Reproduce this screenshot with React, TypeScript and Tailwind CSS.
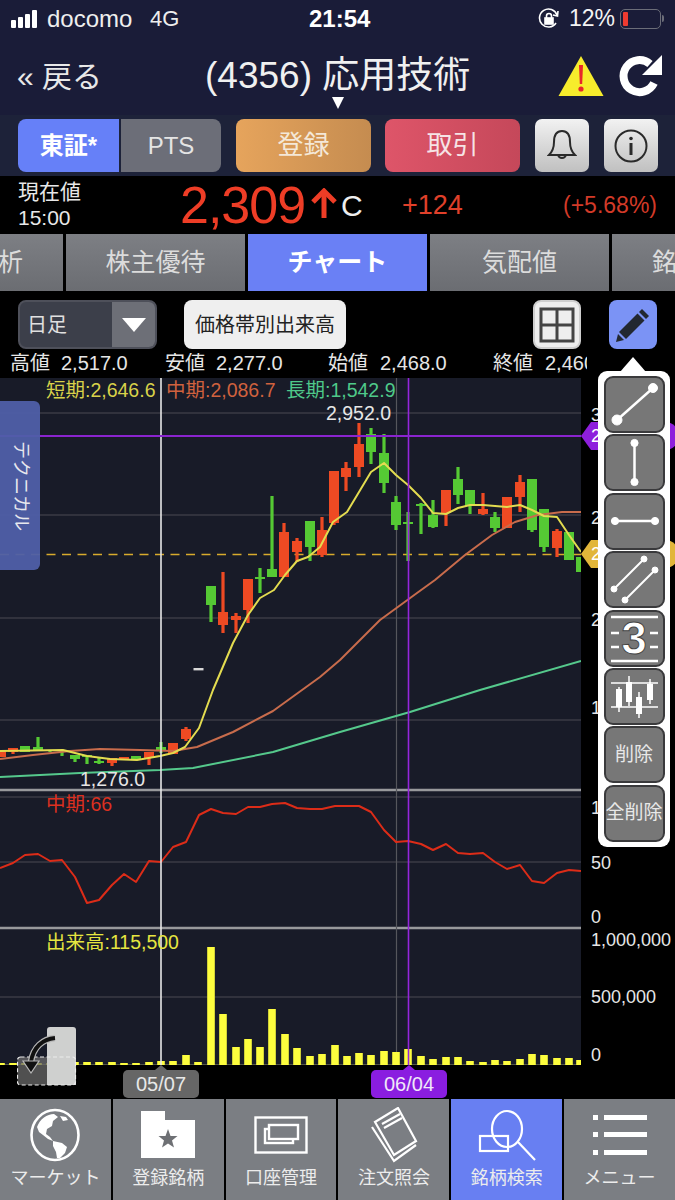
import React from 'react';

type Candle = [number, number, number, number, number, 'r' | 'g'];

// x, wick top, wick bottom, body top, body bottom, colour
const candles: Candle[] = [
    [1, 751, 757, 751, 757, 'r'], [13, 748, 754, 748, 752, 'r'], [25, 746, 752, 746, 752, 'g'], [38, 737, 750, 747, 750, 'g'],
    [50, 750, 752, 750, 751, 'g'], [62, 750, 756, 750, 751, 'g'], [75, 755, 762, 755, 759, 'g'], [87, 755, 764, 755, 757, 'g'],
    [99, 758, 764, 761, 763, 'g'], [112, 758, 766, 758, 763, 'r'], [124, 757, 760, 757, 760, 'r'], [136, 756, 760, 756, 760, 'g'],
    [149, 752, 765, 752, 758, 'r'], [161, 742, 753, 747, 751, 'g'], [173, 743, 754, 743, 754, 'r'], [186, 727, 741, 729, 739, 'r'],
    [211, 586, 622, 586, 605, 'g'], [223, 572, 633, 612, 625, 'r'], [236, 613, 633, 616, 620, 'r'], [248, 579, 623, 579, 610, 'r'],
    [260, 568, 593, 577, 579, 'g'], [272, 496, 577, 569, 577, 'g'], [284, 523, 577, 532, 577, 'r'], [297, 538, 562, 541, 552, 'r'],
    [310, 521, 561, 521, 547, 'g'], [322, 517, 557, 530, 555, 'r'], [334, 471, 525, 471, 523, 'r'], [346, 462, 491, 468, 477, 'r'],
    [359, 423, 477, 444, 467, 'r'], [371, 428, 464, 434, 452, 'g'], [384, 434, 493, 453, 483, 'g'], [396, 496, 530, 502, 525, 'g'],
    [408, 512, 561, 522, 524, 'g'], [421, 503, 534, 504, 506, 'g'], [433, 500, 528, 515, 527, 'g'], [446, 490, 526, 490, 513, 'r'],
    [458, 467, 504, 479, 495, 'g'], [470, 490, 514, 490, 506, 'g'], [483, 493, 515, 509, 514, 'r'], [495, 512, 532, 517, 528, 'g'],
    [507, 497, 528, 497, 528, 'r'], [520, 475, 512, 482, 497, 'r'], [532, 479, 532, 479, 530, 'g'], [544, 509, 552, 509, 547, 'g'],
    [557, 529, 557, 531, 548, 'r'], [569, 532, 560, 532, 560, 'g'], [581, 557, 572, 557, 572, 'g'],
];

const shortLine = '0,751 63,750 87,756 110,759 137,760 160,756 173,753 185,747 199,728 213,690 233,643 248,615 260,598 274,590 285,575 297,561 308,557 320,547 333,522 347,512 359,492 371,472 384,463 396,475 408,485 421,498 433,513 446,514 458,508 470,505 483,505 495,506 507,507 520,505 532,510 544,516 557,517 569,535 581,552';
const midLine = '0,759 33,755 70,751 100,749 140,750 173,751 197,747 233,732 273,711 320,677 340,660 380,620 417,593 435,580 465,555 492,535 515,522 538,515 562,512 581,512';
const longLine = '0,777 80,773 160,770 193,768 273,752 340,732 410,712 480,690 581,661';
const rsiLine = '0,868 13,863 25,855 38,854 50,861 62,860 75,877 87,903 99,900 112,885 124,874 136,882 149,861 161,862 173,847 186,842 199,815 211,809 223,813 236,814 248,807 260,807 272,804 285,803 297,808 310,809 322,809 335,806 359,806 371,812 384,830 396,842 408,841 421,844 433,850 446,844 458,853 470,854 483,853 495,862 507,869 520,865 532,881 544,883 557,873 569,870 581,871';

// x, top of bar
const volumes: [number, number][] = [
    [1, 1063], [13, 1063], [25, 1063], [38, 1063], [50, 1063], [62, 1062], [75, 1062], [87, 1062], [99, 1062], [112, 1062], [124, 1063], [136, 1063],
    [149, 1062], [161, 1061], [173, 1061], [186, 1055], [198, 1062], [211, 947], [223, 1014], [236, 1047], [248, 1039], [260, 1047], [272, 1009],
    [285, 1034], [297, 1048], [310, 1056], [322, 1054], [335, 1045], [347, 1056], [359, 1053], [371, 1055], [384, 1051], [396, 1052], [408, 1049],
    [421, 1056], [433, 1059], [446, 1057], [458, 1057], [470, 1061], [483, 1062], [495, 1060], [507, 1061], [520, 1059], [532, 1054], [544, 1055],
    [557, 1058], [569, 1058], [580, 1060],
];

const gridLines = [413, 515, 618, 720, 797, 862, 997];

const ChartSvg = () => (
    <svg viewBox="0 378 581 687" className="block h-[687px] w-[581px]">
        <rect x="0" y="378" width="581" height="687" fill="#181b28" />
        {gridLines.map((y) => (
            <line key={y} x1="0" x2="581" y1={y} y2={y} stroke="#4a4b52" strokeWidth="1.2" />
        ))}
        <line x1="0" x2="581" y1="790" y2="790" stroke="#98999c" strokeWidth="2.5" />
        <line x1="0" x2="581" y1="928" y2="928" stroke="#98999c" strokeWidth="2.5" />
        <line x1="396.5" x2="396.5" y1="378" y2="1065" stroke="#55565c" strokeWidth="1.2" />
        <line x1="0" x2="581" y1="554.5" y2="554.5" stroke="#d8ab2c" strokeWidth="1.6" strokeDasharray="9 6.5" />
        {candles.map(([x, wt, wb, bt, bb, c]) => (
            <g key={x} fill={c === 'r' ? '#ee4a23' : '#55c934'}>
                <rect x={x - 1.6} y={wt} width="3.2" height={wb - wt} />
                <rect x={x - 5} y={bt} width="10" height={bb - bt} />
            </g>
        ))}
        <rect x="193.5" y="668" width="10" height="2.4" fill="#d8d8d8" />
        <polyline points={longLine} fill="none" stroke="#55c98c" strokeWidth="2" strokeLinejoin="round" />
        <polyline points={midLine} fill="none" stroke="#c86c4c" strokeWidth="2" strokeLinejoin="round" />
        <polyline points={shortLine} fill="none" stroke="#e3dc50" strokeWidth="2" strokeLinejoin="round" />
        <polyline points={rsiLine} fill="none" stroke="#dc2c18" strokeWidth="2" strokeLinejoin="round" />
        <line x1="0" x2="581" y1="1064.5" y2="1064.5" stroke="#55564a" strokeWidth="1" />
        {volumes.map(([x, top]) => (
            <rect key={x} x={x - 3.8} y={top} width="7.6" height={1065 - top} fill="#fdfd3e" />
        ))}
        <line x1="161" x2="161" y1="378" y2="1065" stroke="#e8e8e8" strokeWidth="1.6" />
        <line x1="408.5" x2="408.5" y1="378" y2="1065" stroke="#9526dc" strokeWidth="1.6" />
        <line x1="0" x2="581" y1="436" y2="436" stroke="#8a24cf" strokeWidth="2" />
    </svg>
);

const ToolButton = ({ children }: { children: React.ReactNode }) => (
    <div className="flex h-[57px] w-[61px] items-center justify-center whitespace-nowrap rounded-[9px] border-2 border-[#3a3a3c] bg-[#777777] text-[19px] text-[#e8e8e8]">
        {children}
    </div>
);

const ToolPopup = () => (
    <div className="absolute left-[598px] top-[80px] z-20 flex w-[72px] flex-col items-center gap-[1.4px] rounded-[9px] bg-white py-[5px]">
        <div className="absolute -top-[14px] left-[22px] h-0 w-0 border-x-[13px] border-b-[15px] border-x-transparent border-b-white" />
        <ToolButton>
            <svg width="57" height="53" viewBox="0 0 57 53" fill="white" stroke="white">
                <circle cx="11" cy="42" r="5" />
                <circle cx="47" cy="10" r="4.5" />
                <line x1="11" y1="42" x2="47" y2="10" strokeWidth="2.5" />
            </svg>
        </ToolButton>
        <ToolButton>
            <svg width="57" height="53" viewBox="0 0 57 53" fill="white" stroke="white">
                <circle cx="28.5" cy="7" r="3.6" />
                <circle cx="28.5" cy="46" r="3.6" />
                <line x1="28.5" y1="7" x2="28.5" y2="46" strokeWidth="2.5" />
            </svg>
        </ToolButton>
        <ToolButton>
            <svg width="57" height="53" viewBox="0 0 57 53" fill="white" stroke="white">
                <circle cx="9" cy="26" r="3.6" />
                <circle cx="49" cy="26" r="3.6" />
                <line x1="9" y1="26" x2="49" y2="26" strokeWidth="2.5" />
            </svg>
        </ToolButton>
        <ToolButton>
            <svg width="57" height="53" viewBox="0 0 57 53" fill="white" stroke="white">
                <circle cx="8" cy="36" r="3" />
                <circle cx="38" cy="6" r="3" />
                <line x1="8" y1="36" x2="38" y2="6" strokeWidth="2" />
                <circle cx="19" cy="47" r="3" />
                <circle cx="49" cy="17" r="3" />
                <line x1="19" y1="47" x2="49" y2="17" strokeWidth="2" />
            </svg>
        </ToolButton>
        <ToolButton>
            <div className="relative flex h-full w-full items-center justify-center">
                <svg width="57" height="53" viewBox="0 0 57 53" stroke="white" strokeWidth="2.5" className="absolute left-0 top-0">
                    <line x1="5" y1="5" x2="52" y2="5" />
                    <line x1="5" y1="21" x2="52" y2="21" strokeDasharray="8 31 8" />
                    <line x1="5" y1="35" x2="52" y2="35" strokeDasharray="8 31 8" />
                    <line x1="5" y1="49" x2="52" y2="49" />
                </svg>
                <span className="relative text-[46px] font-bold leading-none text-white [-webkit-text-stroke:1px_#444]">3</span>
            </div>
        </ToolButton>
        <ToolButton>
            <svg width="57" height="53" viewBox="0 0 57 53" fill="white" stroke="white">
                <line x1="5" y1="13" x2="52" y2="13" strokeWidth="1.5" />
                <line x1="5" y1="37" x2="52" y2="37" strokeWidth="1.5" />
                <line x1="13" y1="17" x2="13" y2="42" strokeWidth="1.5" />
                <rect x="10" y="19" width="6" height="18" stroke="none" />
                <line x1="23" y1="6" x2="23" y2="36" strokeWidth="1.5" />
                <rect x="20" y="12" width="6" height="20" stroke="none" />
                <line x1="33" y1="22" x2="33" y2="48" strokeWidth="1.5" />
                <rect x="30" y="27" width="6" height="17" stroke="none" />
                <line x1="44" y1="9" x2="44" y2="34" strokeWidth="1.5" />
                <rect x="41" y="14" width="6" height="16" stroke="none" />
            </svg>
        </ToolButton>
        <ToolButton>削除</ToolButton>
        <ToolButton>全削除</ToolButton>
    </div>
);

const axisLabels: [string, number][] = [
    ['3', 403], ['2', 608], ['1', 696], ['1', 796], ['50', 851], ['0', 905], ['1,000,000', 928], ['500,000', 985], ['0', 1043], ['2', 506],
];

const AxisBadge = ({ top, bg, border }: { top: string; bg: string; border: string }) => (
    <div className={`absolute left-0 flex h-[28px] w-[98px] ${top}`}>
        <span className={`h-0 w-0 border-y-[14px] border-r-[10px] border-y-transparent ${border}`} />
        <span className={`flex flex-1 items-center rounded-r-[14px] text-white ${bg}`}>2</span>
    </div>
);

const RightAxis = () => (
    <div className="relative h-[687px] flex-1 overflow-hidden bg-black text-[18px] leading-[24px] text-[#e6e6e6]">
        {axisLabels.map(([label, y]) => (
            <span key={label + y} className="absolute left-[10px]" style={{ top: y - 378 }}>
                {label}
            </span>
        ))}
        <AxisBadge top="top-[44px]" bg="bg-[#8e1fdc]" border="border-r-[#8e1fdc]" />
        <AxisBadge top="top-[162px]" bg="bg-[#e2b63a]" border="border-r-[#e2b63a]" />
    </div>
);

const GlobeIcon = () => (
    <svg width="52" height="54" viewBox="0 0 52 54" fill="white">
        <ellipse cx="26" cy="27" rx="23.5" ry="25" fill="none" stroke="white" strokeWidth="2.6" />
        <path d="M8 19 C11 11 18 6 25 6 L29 9 L24 13 L23 18 L18 21 L17 26 L21 29 L24 33 L19 31 L14 27 L10 24 Z" />
        <path d="M24 33 L33 35 L38 39 L36 45 L31 50 L28 50 L27 44 L24 38 Z" />
        <path d="M31 8 L37 9 L39 12 L34 13 Z" />
    </svg>
);

const FolderIcon = () => (
    <svg width="54" height="47" viewBox="0 0 54 47">
        <path d="M0 0 H24 V9 H54 V47 H0 Z" fill="white" />
        <path d="M27 18 L29.5 25 L36.5 25 L31 29.5 L33 36.5 L27 32.5 L21 36.5 L23 29.5 L17.5 25 L24.5 25 Z" fill="#6e7074" />
    </svg>
);

const AccountIcon = () => (
    <svg width="54" height="38" viewBox="0 0 54 38" fill="none" stroke="white" strokeWidth="2.4">
        <rect x="1.5" y="1.5" width="51" height="35" />
        <rect x="11" y="13" width="28" height="14" />
        <rect x="15" y="9" width="29" height="14" fill="#7b7e83" />
    </svg>
);

const OrderIcon = () => (
    <svg width="48" height="56" viewBox="0 0 48 56" fill="none" stroke="white" strokeWidth="2.2">
        <path d="M2 20 L24 54 L46 38" />
        <path d="M5 15 L28 1 L46 34 L24 48 Z" fill="#7b7e83" />
        <line x1="12" y1="17" x2="30" y2="7" />
        <line x1="14" y1="21" x2="32" y2="11" />
    </svg>
);

const SearchIcon = () => (
    <svg width="58" height="54" viewBox="0 0 58 54" fill="none" stroke="white" strokeWidth="2.2">
        <rect x="2" y="28" width="28" height="15" />
        <ellipse cx="29" cy="21" rx="15" ry="18" />
        <line x1="40" y1="34" x2="57" y2="52" />
    </svg>
);

const MenuIcon = () => (
    <svg width="54" height="42" viewBox="0 0 54 42" fill="white">
        <rect x="0" y="1" width="5" height="5" />
        <rect x="11" y="1" width="43" height="5" />
        <rect x="0" y="18" width="5" height="5" />
        <rect x="11" y="18" width="43" height="5" />
        <rect x="0" y="36" width="5" height="5" />
        <rect x="11" y="36" width="43" height="5" />
    </svg>
);

const navItems = [
    { label: 'マーケット', icon: <GlobeIcon /> },
    { label: '登録銘柄', icon: <FolderIcon /> },
    { label: '口座管理', icon: <AccountIcon /> },
    { label: '注文照会', icon: <OrderIcon /> },
    { label: '銘柄検索', icon: <SearchIcon />, active: true },
    { label: 'メニュー', icon: <MenuIcon /> },
];

export default function App() {
    return (
        <div className="flex h-[1200px] w-[675px] flex-col overflow-hidden bg-black font-['Liberation_Sans','Noto_Sans_CJK_JP',sans-serif] text-white">
            {/* status bar + title */}
            <div className="flex h-[115px] flex-col bg-[#1a1c38]">
                <div className="flex h-[37px] items-center pl-[11px] pr-[8px] text-[24px]">
                    <div className="flex items-end gap-[2px]">
                        <span className="h-[8px] w-[5px] rounded-[1px] bg-white" />
                        <span className="h-[11px] w-[5px] rounded-[1px] bg-white" />
                        <span className="h-[14px] w-[5px] rounded-[1px] bg-white" />
                        <span className="h-[18px] w-[5px] rounded-[1px] bg-white" />
                    </div>
                    <span className="ml-[10px] w-[103px] text-[#eeeeee]">docomo</span>
                    <span className="w-[159px] text-[22px] text-[#eeeeee]">4G</span>
                    <span className="w-[229px] font-bold text-white">21:54</span>
                    <svg width="22" height="22" viewBox="0 0 22 22" fill="none" stroke="white" strokeWidth="1.6">
                        <path d="M18 15 A9 9 0 1 1 19 7" />
                        <path d="M20 3 L19.5 8 L15 7" />
                        <rect x="7" y="10" width="8" height="6" fill="white" />
                        <path d="M8.5 10 V8 A2.5 2.5 0 0 1 13.5 8 V10" />
                    </svg>
                    <span className="ml-[9px] text-[23px] text-[#f4f4f4]">12%</span>
                    <div className="ml-[5px] flex h-[20px] w-[41px] items-center rounded-[5px] border border-[#6b6d78] px-[2px]">
                        <span className="h-[14px] w-[5px] rounded-[1px] bg-[#ee3b30]" />
                    </div>
                    <span className="ml-px h-[7px] w-[2px] rounded-r bg-[#6b6d78]" />
                </div>
                <div className="relative flex flex-1 items-center pl-[17px] pr-[13px]">
                    <span className="w-[188px] text-[30px] text-[#e8e8e8]">« 戻る</span>
                    <span className="flex-1 whitespace-nowrap text-[37px] leading-[44px] text-[#f0f0f0]">(4356) 応用技術</span>
                    <svg width="46" height="42" viewBox="0 0 46 42" className="mr-[14px]">
                        <path d="M23 1 L45.5 41 H0.5 Z" fill="#f7ec2c" />
                        <path d="M21 10 H25 L24.2 29 H21.8 Z" fill="#e8262a" />
                        <circle cx="23" cy="34" r="2.6" fill="#e8262a" />
                    </svg>
                    <svg width="44" height="44" viewBox="0 0 44 44" fill="none">
                        <path d="M36 29 A16 16 0 1 1 32 10" stroke="white" strokeWidth="8" />
                        <path d="M44 1 V21 H24 Z" fill="white" />
                    </svg>
                    <span className="absolute bottom-[6px] left-[332px] h-0 w-0 border-x-[6px] border-t-[12px] border-x-transparent border-t-white" />
                </div>
            </div>

            {/* market / action buttons */}
            <div className="flex h-[61px] items-start bg-[#1d2239] pl-[18px] pt-[4px]">
                <div className="flex h-[53px] w-[203px] overflow-hidden rounded-[8px]">
                    <div className="flex w-[101px] items-center justify-center bg-[#6680f8] text-[24px] font-bold">東証*</div>
                    <div className="ml-[2px] flex flex-1 items-center justify-center bg-[#6c6e78] text-[24px] text-[#e4e4e4]">PTS</div>
                </div>
                <div className="ml-[15px] flex h-[53px] w-[135px] items-center justify-center rounded-[8px] bg-linear-to-r from-[#e6a45c] to-[#c58c50] text-[26px] text-[#f4e8d8]">登録</div>
                <div className="ml-[14px] flex h-[53px] w-[135px] items-center justify-center rounded-[8px] bg-linear-to-r from-[#de5569] to-[#c5485a] text-[26px] text-[#f6e4e6]">取引</div>
                <div className="ml-[15px] flex h-[53px] w-[54px] items-center justify-center rounded-[7px] bg-linear-to-b from-[#f2f2f2] to-[#c0c0c0]">
                    <svg width="30" height="34" viewBox="0 0 30 34" fill="none" stroke="#2a2a2a" strokeWidth="2">
                        <path d="M15 2 C9 2 7 7 7 13 C7 20 5 23 2 26 H28 C25 23 23 20 23 13 C23 7 21 2 15 2 Z" />
                        <path d="M11 26 A4.2 4.2 0 0 0 19 26" />
                    </svg>
                </div>
                <div className="ml-[15px] flex h-[53px] w-[54px] items-center justify-center rounded-[7px] bg-linear-to-b from-[#f2f2f2] to-[#c0c0c0]">
                    <svg width="34" height="34" viewBox="0 0 34 34" fill="none" stroke="#2a2a2a" strokeWidth="2">
                        <circle cx="17" cy="17" r="15.5" />
                        <line x1="17" y1="14" x2="17" y2="26" strokeWidth="3" />
                        <circle cx="17" cy="9.5" r="1.8" fill="#2a2a2a" stroke="none" />
                    </svg>
                </div>
            </div>

            {/* price row */}
            <div className="flex h-[58px] items-center pl-[18px] pr-[18px]">
                <div className="w-[162px] text-[21px] leading-[26px] text-[#e8e8e8]">
                    <div>現在値</div>
                    <div>15:00</div>
                </div>
                <span className="w-[131px] whitespace-nowrap text-[52px] leading-none tracking-[-1px] text-[#ee3d26]">2,309</span>
                <svg width="26" height="32" viewBox="0 0 26 32" className="mb-[2px] mr-[4px]" fill="none" stroke="#ee3d26" strokeWidth="5">
                    <line x1="13" y1="30" x2="13" y2="3" />
                    <path d="M2 14 L13 3 L24 14" />
                </svg>
                <span className="w-[61px] text-[30px] text-[#eeeeee]">C</span>
                <span className="text-[27px] text-[#e0402a]">+124</span>
                <span className="ml-auto text-[23px] text-[#d23a28]">(+5.68%)</span>
            </div>

            {/* tabs */}
            <div className="flex h-[57px] gap-[3px] overflow-hidden text-[25px] text-[#dcdcdc]">
                <div className="flex w-[63px] items-center justify-end overflow-hidden bg-linear-to-b from-[#7d7f84] to-[#6b6d72] pr-[40px]"><span className="shrink-0">分析</span></div>
                <div className="flex w-[179px] items-center justify-center bg-linear-to-b from-[#7d7f84] to-[#6b6d72]">株主優待</div>
                <div className="flex w-[179px] items-center justify-center bg-[#6a80f5] font-bold text-white">チャート</div>
                <div className="flex w-[179px] items-center justify-center bg-linear-to-b from-[#7d7f84] to-[#6b6d72]">気配値</div>
                <div className="flex flex-1 items-center overflow-hidden bg-linear-to-b from-[#7d7f84] to-[#6b6d72] pl-[40px]"><span className="shrink-0">銘柄</span></div>
            </div>

            <div className="relative flex flex-1 flex-col">
                {/* chart controls */}
                <div className="flex h-[62px] items-center pb-[4px] pl-[18px] pt-[9px]">
                    <div className="flex h-[49px] w-[139px] overflow-hidden rounded-[8px] border-2 border-[#4e505a] bg-[#3c3f4a]">
                        <span className="flex w-[92px] items-center pl-[7px] text-[20px] text-[#e0e0e0]">日足</span>
                        <span className="flex flex-1 items-center justify-center bg-[#6d6f77]">
                            <span className="h-0 w-0 border-x-[12px] border-t-[14px] border-x-transparent border-t-white" />
                        </span>
                    </div>
                    <div className="ml-[27px] flex h-[49px] w-[162px] items-center justify-center rounded-[8px] bg-[#efefef] text-[20px] text-[#222222]">価格帯別出来高</div>
                    <div className="ml-[187px] flex h-[49px] w-[48px] items-center justify-center rounded-[8px] border-2 border-[#cfcfcf] bg-[#eeeeee]">
                        <svg width="36" height="36" viewBox="0 0 36 36" fill="none" stroke="#444444" strokeWidth="3">
                            <rect x="2" y="2" width="32" height="32" />
                            <line x1="18" y1="2" x2="18" y2="34" />
                            <line x1="2" y1="18" x2="34" y2="18" />
                        </svg>
                    </div>
                    <div className="ml-[28px] flex h-[49px] w-[48px] items-center justify-center rounded-[8px] bg-[#7b93f5]">
                        <svg width="36" height="36" viewBox="0 0 36 36" fill="#222831">
                            <path d="M27 2 L34 9 L31 12 L24 5 Z" />
                            <path d="M22.5 6.5 L29.5 13.5 L11 32 L4 25 Z" />
                            <path d="M3 27 L9 33 L1 35 Z" />
                        </svg>
                    </div>
                </div>

                {/* OHLC row */}
                <div className="flex h-[25px] items-center overflow-hidden pb-[5px] text-[20px] leading-none text-[#e6e6e6]">
                    <div className="flex w-[165px] shrink-0 pl-[10px]"><span className="w-[51px]">高値</span><span>2,517.0</span></div>
                    <div className="flex w-[163px] shrink-0"><span className="w-[51px]">安値</span><span>2,277.0</span></div>
                    <div className="flex w-[165px] shrink-0"><span className="w-[52px]">始値</span><span>2,468.0</span></div>
                    <div className="flex w-[94px] shrink-0 overflow-hidden"><span className="w-[52px] shrink-0">終値</span><span className="shrink-0">2,460.0</span></div>
                </div>

                {/* chart */}
                <div className="relative flex h-[687px]">
                    <ChartSvg />
                    <RightAxis />
                    <div className="absolute left-0 top-[23px] flex h-[169px] w-[40px] items-center justify-center rounded-r-[6px] bg-[#4f5fa8]/95 text-[18px] text-[#e8e8ee] [text-orientation:sideways] [writing-mode:vertical-rl]">テクニカル</div>
                    <span className="absolute left-[46px] top-0 text-[19.5px] leading-[24px] text-[#d8d24a]">短期:2,646.6</span>
                    <span className="absolute left-[166px] top-0 text-[19.5px] leading-[24px] text-[#d0623e]">中期:2,086.7</span>
                    <span className="absolute left-[286px] top-0 text-[19.5px] leading-[24px] text-[#4fc98a]">長期:1,542.9</span>
                    <span className="absolute left-[326px] top-[23px] text-[19.5px] leading-[24px] text-[#e6e6e6]">2,952.0</span>
                    <span className="absolute left-[80px] top-[389px] text-[19.5px] leading-[24px] text-[#e6e6e6]">1,276.0</span>
                    <span className="absolute left-[46px] top-[414px] text-[19.5px] leading-[24px] text-[#dc3020]">中期:66</span>
                    <span className="absolute left-[46px] top-[552px] text-[19.5px] leading-[24px] text-[#e6e640]">出来高:115,500</span>
                </div>

                {/* date labels */}
                <div className="relative h-[34px] flex-1">
                    <div className="absolute left-[123px] top-[5px] flex h-[28px] w-[76px] items-center justify-center rounded-[5px] bg-[#666666] text-[20px] text-[#e8e8e8]">05/07</div>
                    <div className="absolute left-[155px] top-0 h-0 w-0 border-x-[6px] border-b-[5px] border-x-transparent border-b-[#666666]" />
                    <div className="absolute left-[371px] top-[5px] flex h-[28px] w-[76px] items-center justify-center rounded-[5px] bg-[#8a1de0] text-[20px] text-[#f0e8f8]">06/04</div>
                    <div className="absolute left-[403px] top-0 h-0 w-0 border-x-[6px] border-b-[5px] border-x-transparent border-b-[#8a1de0]" />
                    <svg width="60" height="60" viewBox="0 0 60 60" className="absolute left-[17px] -top-[38px]">
                        <path d="M30 3 A3 3 0 0 1 33 0 H56 A3 3 0 0 1 59 3 V55 A3 3 0 0 1 56 58 H30 Z" fill="#cfd0cf" />
                        <rect x="0.5" y="30" width="58" height="28" rx="3" fill="#6b6b6b" fillOpacity="0.75" />
                        <rect x="30" y="30" width="29" height="28" fill="#cfd0cf" />
                        <rect x="0.5" y="30" width="58" height="28" rx="3" fill="none" stroke="#ececec" strokeWidth="1.2" strokeDasharray="4 2.5" />
                        <path d="M38 11 C26 12 16 20 14 35" fill="none" stroke="#b8b8b8" strokeWidth="6.5" />
                        <path d="M38 11 C26 12 16 20 14 35" fill="none" stroke="#111111" strokeWidth="4" />
                        <path d="M6 34 L22 34 L14 46 Z" fill="#111111" stroke="#b8b8b8" strokeWidth="1.2" />
                    </svg>
                </div>
                <ToolPopup />
            </div>

            {/* bottom nav */}
            <div className="flex h-[101px] gap-[2px]">
                {navItems.map((item) => (
                    <div key={item.label} className={`flex flex-1 flex-col items-center ${item.active ? 'bg-[#687ff2]' : 'bg-[#7b7e83]'}`}>
                        <div className="flex h-[68px] items-center justify-center pt-[3px]">{item.icon}</div>
                        <span className="text-[18px] leading-[22px] text-[#ececec]">{item.label}</span>
                    </div>
                ))}
            </div>
        </div>
    );
}
